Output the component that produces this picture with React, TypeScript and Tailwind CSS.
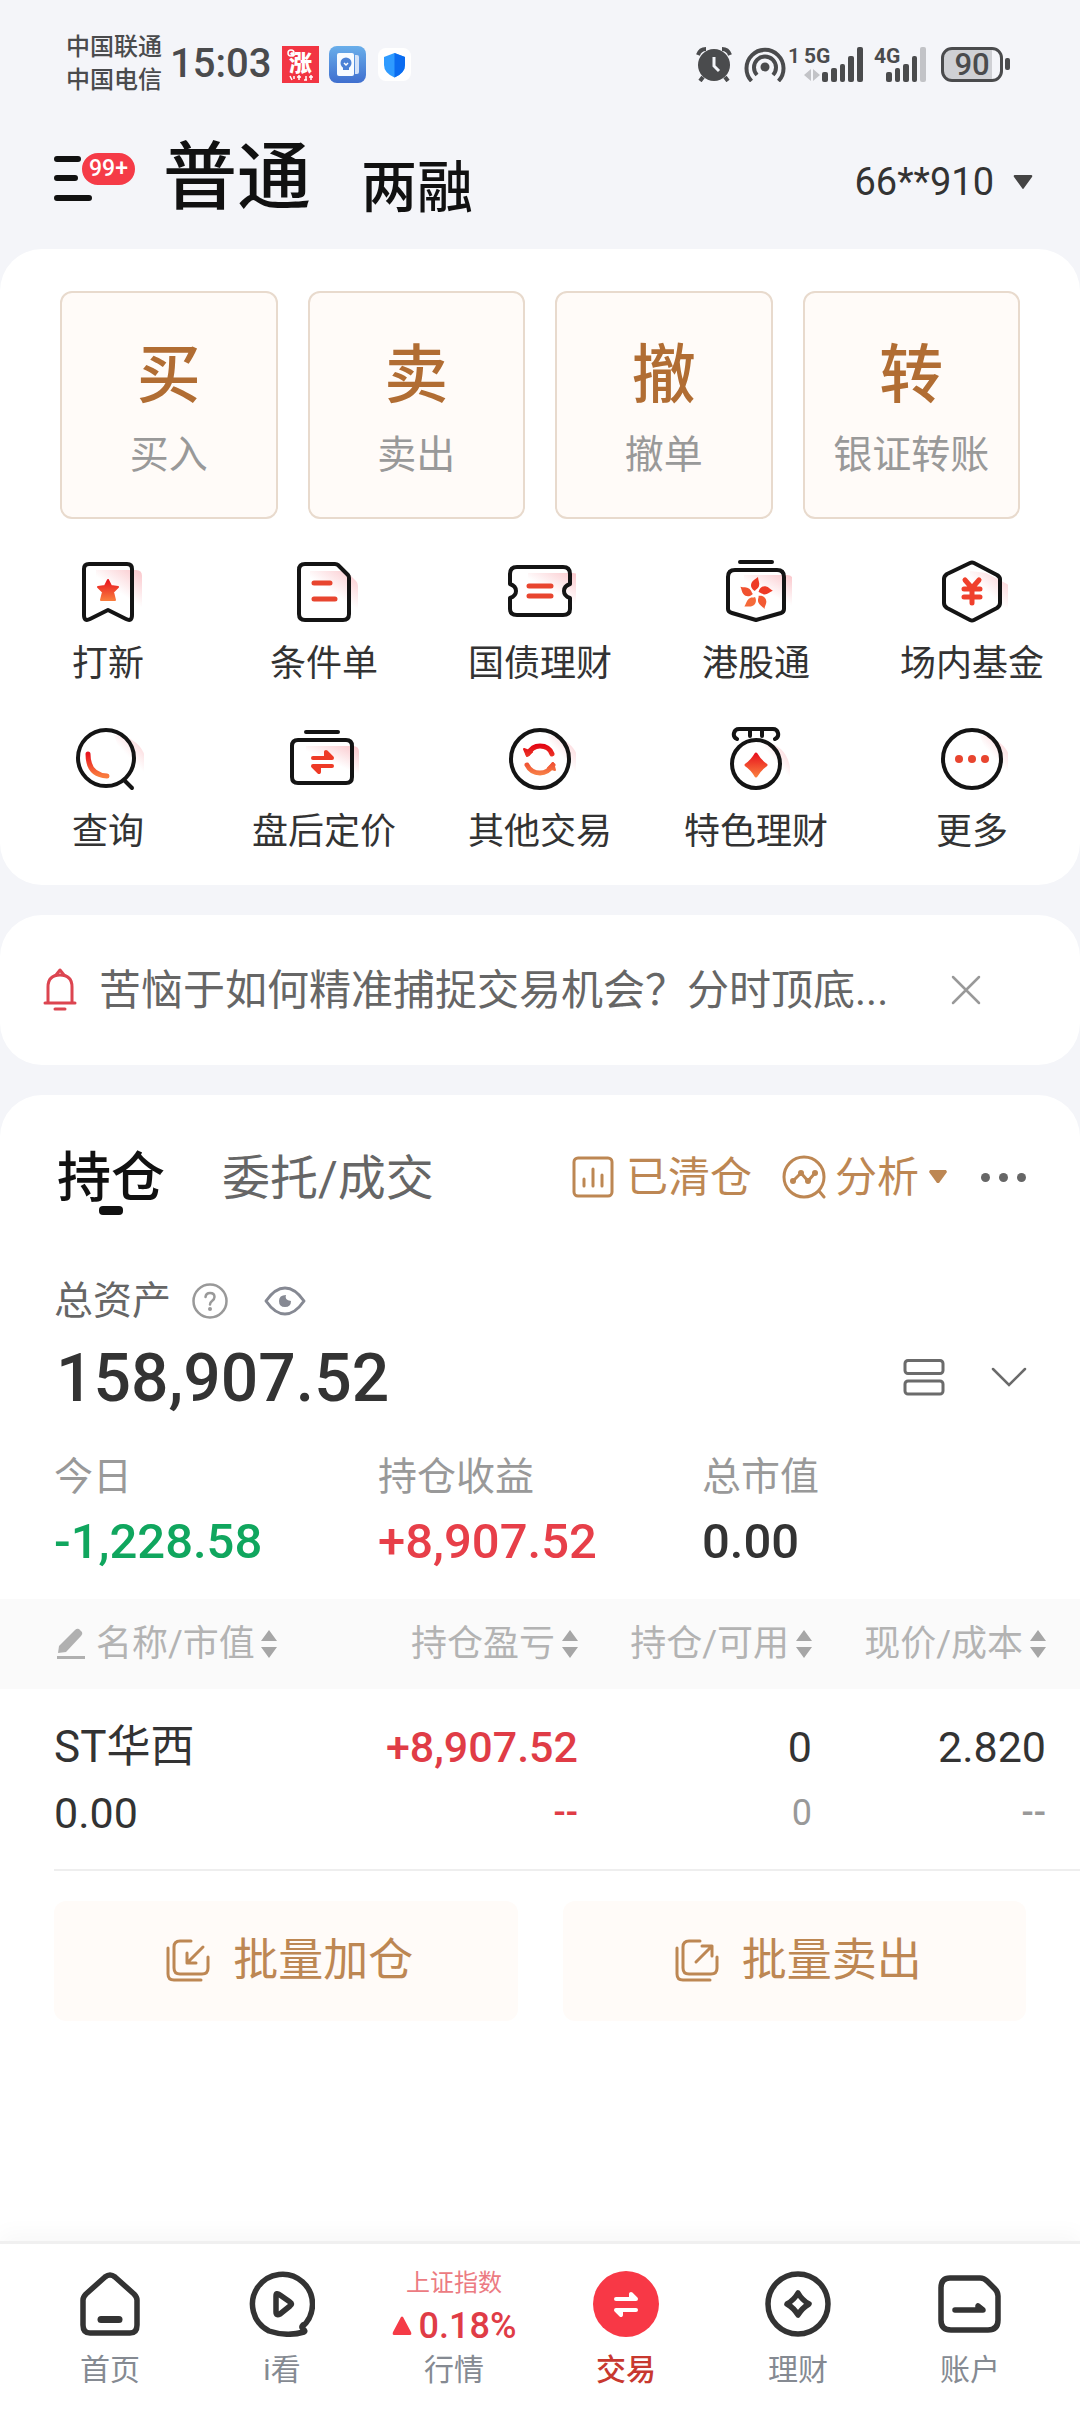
import type { ReactNode } from 'react';

const INK = '#141414';
const DARK = '#333333';
const GOLD = '#bd8753';

interface IconProps {
  children: ReactNode;
  ghost?: string;
}

// 72px feature icon: dark outline, red gradient detail and a pale pink shadow on the right
function FeatureIcon({ children, ghost }: IconProps) {
  return (
    <svg className="h-[72px] w-[72px]" viewBox="0 0 72 72" fill="none" aria-hidden="true">
      {ghost && <path d={ghost} fill="url(#ghost)" />}
      <g stroke={INK} strokeWidth="4" strokeLinecap="round" strokeLinejoin="round">
        {children}
      </g>
    </svg>
  );
}

function SharedGradients() {
  return (
    <svg className="absolute h-0 w-0" aria-hidden="true">
      <defs>
        <linearGradient id="ghost" x1="1" y1="0.1" x2="0.5" y2="0.75">
          <stop offset="0" stopColor="#f8a9b0" stopOpacity="0.6" />
          <stop offset="0.8" stopColor="#f8a9b0" stopOpacity="0" />
        </linearGradient>
        <linearGradient id="red" x1="0" y1="0" x2="0" y2="1">
          <stop offset="0" stopColor="#e8141e" />
          <stop offset="1" stopColor="#f97b3d" />
        </linearGradient>
        <linearGradient id="redSpace" gradientUnits="userSpaceOnUse" x1="0" y1="22" x2="0" y2="54">
          <stop offset="0" stopColor="#e30613" />
          <stop offset="1" stopColor="#f98a4b" />
        </linearGradient>
      </defs>
    </svg>
  );
}

// one petal of the bauhinia, repeated around (36, 39)
const petal = 'M35 36C31 34 30 30 32 27 33 25 36 24 38 22 38 25 40 28 39 31 38 34 36 34 35 36z';

const features = [
  {
    label: '打新',
    icon: (
      <FeatureIcon ghost="M24 15H64q6 0 6 6V56H24z">
        <path d="M17 9H55q5 0 5 5V60q0 7-6 4L36 55 18 64q-6 3-6-4V14q0-5 5-5z" />
        <path d="M36 25L39 31 46 32 41 37 43 45H29L31 37 26 32 33 31z" fill="url(#red)" stroke="url(#red)" strokeWidth="2" />
      </FeatureIcon>
    ),
  },
  {
    label: '条件单',
    icon: (
      <FeatureIcon ghost="M22 16H58L68 26q2 2 2 5V58H22z">
        <path d="M17 9H47q2 0 3 1L60 20q1 1 1 3V59q0 6-6 6H17q-6 0-6-6V15q0-6 6-6z" />
        <path d="M26 28H42M26 44H47" stroke="#e8452f" strokeWidth="5" />
      </FeatureIcon>
    ),
  },
  {
    label: '国债理财',
    icon: (
      <FeatureIcon ghost="M24 18H69q6 0 6 6V54H24z">
        <path d="M13 12H59q7 0 7 7v10q-6 2-6 7t6 7V54q0 6-7 6H13q-7 0-7-6V43q6-2 6-7t-6-7V19q0-7 7-7z" />
        <path d="M25 31H47M25 41H47" stroke="#e8452f" strokeWidth="5" />
      </FeatureIcon>
    ),
  },
  {
    label: '港股通',
    icon: (
      <FeatureIcon ghost="M24 20H67q6 0 6 6V54H24z">
        <path d="M20 7H52M15 15H57q7 0 7 7V54q0 3-3 4L36 65 12 58q-4-1-4-4V22q0-7 7-7z" />
        <g stroke="none">
          <path d={petal} fill="#ee3a26" />
          <path d={petal} fill="#ee3a26" transform="rotate(72 36 39)" />
          <path d={petal} fill="#f35a33" transform="rotate(144 36 39)" />
          <path d={petal} fill="#f56a3a" transform="rotate(216 36 39)" />
          <path d={petal} fill="#f1512f" transform="rotate(288 36 39)" />
        </g>
      </FeatureIcon>
    ),
  },
  {
    label: '场内基金',
    icon: (
      <FeatureIcon ghost="M34 16L50 18 71 29q3 2 3 5V60H34z">
        <path d="M34 8q2-1 4 0L61 20q3 2 3 4V48q0 3-3 5L38 65q-2 1-4 0L11 53q-3-2-3-5V24q0-3 3-5z" />
        <path d="M29 25L36 33 43 25M28 34H44M28 42H44M36 34V48" stroke="#f0402c" strokeWidth="5" />
      </FeatureIcon>
    ),
  },
  {
    label: '查询',
    icon: (
      <FeatureIcon ghost="M42 12Q70 14 75 40V56H58z">
        <circle cx="34" cy="35" r="28" />
        <path d="M53 58L60 65" />
        <path d="M16 31Q16 52 35 53" stroke="url(#red)" strokeWidth="5" />
      </FeatureIcon>
    ),
  },
  {
    label: '盘后定价',
    icon: (
      <FeatureIcon ghost="M18 23H65q6 0 6 6V54H18z">
        <path d="M18 9H50M10 17H58q6 0 6 6V54q0 6-6 6H10q-6 0-6-6V23q0-6 6-6z" />
        <path d="M25 35H44L38 29V35M44 43H25L31 49V43" fill="#ee3a26" stroke="#ee3a26" strokeWidth="4" />
      </FeatureIcon>
    ),
  },
  {
    label: '其他交易',
    icon: (
      <FeatureIcon ghost="M44 12Q70 16 75 38V56H58z">
        <circle cx="36" cy="36" r="29" />
        <path d="M24 31Q28 23 36 23 45 23 48 31M49 42Q44 50 36 50 27 50 23 42" stroke="url(#redSpace)" strokeWidth="5" />
        <path d="M20 26L23 33 28 29zM51 47L49 40 44 45z" fill="url(#redSpace)" stroke="url(#redSpace)" strokeWidth="2" />
      </FeatureIcon>
    ),
  },
  {
    label: '特色理财',
    icon: (
      <FeatureIcon ghost="M44 19Q66 22 70 44V58H52z">
        <circle cx="36" cy="41" r="24" />
        <path d="M17 16Q13 14 14 10 15 6 19 6H53Q57 6 58 10 59 14 55 16M30 7V13M42 7V13" />
        <path d="M36 31Q40 38 46 42 40 46 36 53 32 46 26 42 32 38 36 31z" fill="url(#red)" stroke="url(#red)" strokeWidth="3" />
      </FeatureIcon>
    ),
  },
  {
    label: '更多',
    icon: (
      <FeatureIcon ghost="M44 12Q70 16 75 38V56H58z">
        <circle cx="36" cy="36" r="29" />
        <g fill="#e8452f" stroke="none">
          <circle cx="23" cy="36" r="4" />
          <circle cx="36" cy="36" r="4" />
          <circle cx="49" cy="36" r="4" />
        </g>
      </FeatureIcon>
    ),
  },
];

const quickActions = [
  { mark: '买', label: '买入' },
  { mark: '卖', label: '卖出' },
  { mark: '撤', label: '撤单' },
  { mark: '转', label: '银证转账' },
];

const stats = [
  { label: '今日', value: '-1,228.58', tone: 'text-[#10a65e]' },
  { label: '持仓收益', value: '+8,907.52', tone: 'text-[#e73f49]' },
  { label: '总市值', value: '0.00', tone: 'text-[#333333]' },
];

function StatusBar() {
  return (
    <div className="flex items-center pt-[31px] pr-[70px] pl-[66px] text-[#4a4b4d]">
      <div className="text-[24px] leading-[33px] font-medium">
        <p>中国联通</p>
        <p>中国电信</p>
      </div>
      <p className="ml-2 text-[40px] leading-[48px] font-medium">15:03</p>
      <svg className="ml-[11px] h-[37px] w-[37px] shrink-0" viewBox="0 0 37 37" aria-hidden="true">
        <rect width="37" height="37" fill="#f23543" />
        <text x="7" y="25" fontSize="23" fontWeight="900" fill="#fff">涨</text>
        <circle cx="9" cy="7" r="3" fill="none" stroke="#fff" strokeWidth="1.5" />
        <path d="M8 30l2 4M12 30v3M15 31h4M17 29v5M22 34h3M24 30v4M27 31h4M29 29v5" stroke="#fff" strokeWidth="1.5" />
      </svg>
      <svg className="ml-[10px] h-[37px] w-[37px] shrink-0" viewBox="0 0 37 37" aria-hidden="true">
        <defs>
          <linearGradient id="book" x1="0" y1="0" x2="0" y2="1">
            <stop offset="0" stopColor="#69aeea" />
            <stop offset="1" stopColor="#3f6fcf" />
          </linearGradient>
        </defs>
        <rect width="37" height="37" rx="8" fill="url(#book)" />
        <path d="M26 9h2q2 0 2 2V26q0 2-2 2h-2z" fill="#d3e2f8" />
        <rect x="8" y="7" width="17" height="23" rx="2" fill="#f7fbff" />
        <circle cx="17" cy="17" r="5.5" fill="#4c82d6" />
        <path d="M14 20h6v4h-6z" fill="#4c82d6" />
        <path d="M15 17l2 2 2-2" stroke="#fff" strokeWidth="1.5" fill="none" />
      </svg>
      <svg className="ml-3 h-[33px] w-[33px] shrink-0" viewBox="0 0 33 33" aria-hidden="true">
        <rect width="33" height="33" rx="8" fill="#fff" />
        <path d="M16.5 5L27 9v8q0 8-10.5 12.5Q6 25 6 17V9z" fill="#2f9bff" />
        <path d="M16.5 5L27 9v8q0 8-10.5 12.5z" fill="#0b6cf0" />
      </svg>

      <div className="ml-auto flex items-center">
        <svg className="h-[36px] w-[36px]" viewBox="0 0 36 36" fill="none" aria-hidden="true">
          <circle cx="18" cy="19" r="16" fill="#4a4b4d" />
          <path d="M2 9Q4 3 10 3M34 9Q32 3 26 3" stroke="#4a4b4d" strokeWidth="4" />
          <path d="M7 31L4 35M29 31L32 35" stroke="#4a4b4d" strokeWidth="4" />
          <path d="M18 11V20L23 25" stroke="#f4f5f9" strokeWidth="3" />
        </svg>
        <svg className="ml-3 h-[36px] w-[42px]" viewBox="0 0 42 36" fill="none" stroke="#4a4b4d" strokeWidth="4" aria-hidden="true">
          <path d="M7.5 35A18.5 18.5 0 1 1 34.5 35" />
          <path d="M13 29A11 11 0 1 1 29 29" />
          <circle cx="21" cy="21" r="4.5" fill="#4a4b4d" stroke="none" />
        </svg>
        <svg className="ml-[2px] h-[44px] w-[77px] overflow-visible" viewBox="0 -4 77 44" fill="#4a4b4d" aria-hidden="true">
          <text x="0" y="17" fontSize="21" fontWeight="600">1</text>
          <text x="16" y="17" fontSize="21" fontWeight="700">5G</text>
          <path d="M16 29L23 23V35zM32 29L25 23V35z" fill="#c2c3c7" />
          <rect x="34" y="26" width="6" height="10" rx="2" />
          <rect x="43" y="22" width="6" height="14" rx="2" />
          <rect x="52" y="18" width="5" height="18" rx="2" />
          <rect x="60" y="10" width="6" height="26" rx="2" />
          <rect x="69" y="1" width="6" height="35" rx="2" />
        </svg>
        <svg className="ml-[8px] h-[44px] w-[54px] overflow-visible" viewBox="0 -4 54 44" fill="#4a4b4d" aria-hidden="true">
          <text x="1" y="17" fontSize="21" fontWeight="700">4G</text>
          <rect x="13" y="26" width="6" height="10" rx="2" />
          <rect x="22" y="22" width="5" height="14" rx="2" />
          <rect x="30" y="18" width="6" height="18" rx="2" />
          <rect x="39" y="10" width="5" height="26" rx="2" />
          <rect x="47" y="1" width="6" height="35" rx="2" fill="#c2c3c7" />
        </svg>
        <div className="ml-[14px] flex h-[35px] w-[62px] items-center justify-center rounded-[11px] border-3 border-[#4a4b4d] bg-[linear-gradient(90deg,#cfd0d4_85%,transparent_85%)] text-[31px] leading-none font-medium">
          90
        </div>
        <span className="ml-[2px] h-[12px] w-[5px] rounded-[2px] bg-[#4a4b4d]" />
      </div>
    </div>
  );
}

function Header() {
  return (
    <header className="flex items-center pt-[27px] pr-[47px] pb-[18px] pl-[54px] text-[#111111]">
      <button className="relative h-[46px] w-[82px]" aria-label="菜单">
        <svg className="h-[46px] w-[40px]" viewBox="0 0 40 46" stroke="#111" strokeWidth="6" strokeLinecap="round" aria-hidden="true">
          <path d="M3 4H24M3 23H21M3 43H35" />
        </svg>
        <span className="absolute -top-1 left-[26px] rounded-full border-2 border-[#f4f5f9] bg-[#f53b47] px-[7px] text-[23px] leading-[32px] font-medium text-white">
          99+
        </span>
      </button>
      <nav className="ml-[27px] flex items-end gap-[50px]">
        <a href="#normal" className="text-[74px] leading-[107px] font-medium">普通</a>
        <a href="#margin" className="text-[56px] leading-[86px] font-medium">两融</a>
      </nav>
      <button className="ml-auto flex items-center gap-[19px] pt-[8px] text-[38px] leading-[48px] text-[#333333]">
        66**910
        <svg className="h-[16px] w-[20px]" viewBox="0 0 20 16" aria-hidden="true">
          <path d="M2 1H18Q20 1 19 3L11 14Q10 16 9 14L1 3Q0 1 2 1z" fill="#444" />
        </svg>
      </button>
    </header>
  );
}

function SortIcon() {
  return (
    <svg className="h-[28px] w-[16px] shrink-0" viewBox="0 0 16 28" fill="#a6a6a6" aria-hidden="true">
      <path d="M8 0L16 11H0zM8 28L16 17H0z" />
    </svg>
  );
}

function BatchIcon({ arrow }: { arrow: string }) {
  return (
    <svg className="h-[44px] w-[44px]" viewBox="0 0 44 44" fill="none" stroke={GOLD} strokeWidth="3" strokeLinecap="round" strokeLinejoin="round" aria-hidden="true">
      <path d="M25 2H14Q8 2 8 8V29Q8 35 14 35H36Q42 35 42 29V18" />
      <path d="M2 9V35Q2 41 8 41H35" />
      <path d={arrow} />
    </svg>
  );
}

function NavItem({ label, active, children }: { label: string; active?: boolean; children: ReactNode }) {
  return (
    <a href={`#${label}`} className="flex flex-1 flex-col items-center">
      <span className="flex h-[66px] flex-col items-center">{children}</span>
      <span className={`mt-[13px] text-[30px] leading-[40px] ${active ? 'font-medium text-[#c8382f]' : 'text-[#858a92]'}`}>
        {label}
      </span>
    </a>
  );
}

function NavIcon({ children }: { children: ReactNode }) {
  return (
    <svg className="h-[66px] w-[66px]" viewBox="0 0 66 66" fill="none" stroke={DARK} strokeWidth="5.5" strokeLinecap="round" strokeLinejoin="round" aria-hidden="true">
      {children}
    </svg>
  );
}

function BottomNav() {
  return (
    <footer className="sticky bottom-0 flex border-t-3 border-[#f0f0f0] bg-white px-[24px] pt-[27px] pb-[22px] shadow-[0_-8px_20px_rgba(0,0,0,0.03)]">
      <NavItem label="首页">
        <NavIcon>
          <path d="M28 6Q33 2 38 6L57 23Q60 26 60 29V54Q60 62 53 62H13Q6 62 6 54V29Q6 26 9 23z" />
          <path d="M24 48.5H42" strokeWidth="7" />
        </NavIcon>
      </NavItem>
      <NavItem label="i看">
        <NavIcon>
          <path d="M53 56A30 30 0 1 0 20 60Q38 66 55 61 57 60 54 58 52 56 54 54" />
          <path d="M27 25Q27 21 31 24L41 31Q44 33 41 35L31 43Q27 45 27 41z" />
        </NavIcon>
      </NavItem>
      <NavItem label="行情">
        <span className="text-[24px] leading-[24px] text-[#ec7b82]">上证指数</span>
        <span className="mt-[15px] flex items-center gap-[7px] text-[36px] leading-[32px] font-medium text-[#e03c46]">
          <svg className="h-[20px] w-[20px]" viewBox="0 0 20 20" aria-hidden="true">
            <path d="M9 1Q10 0 11 1L19 16Q20 19 18 19H2Q0 19 1 16z" fill="#f53b47" />
          </svg>
          0.18%
        </span>
      </NavItem>
      <NavItem label="交易" active>
        <svg className="h-[66px] w-[66px]" viewBox="0 0 66 66" aria-hidden="true">
          <circle cx="33" cy="33" r="33" fill="#f83846" />
          <path d="M23 28H43L38 23V28M43 39H23L28 44V39" fill="#fff" stroke="#fff" strokeWidth="4" strokeLinecap="round" strokeLinejoin="round" />
        </svg>
      </NavItem>
      <NavItem label="理财">
        <NavIcon>
          <circle cx="33" cy="33" r="30" />
          <path d="M33 22Q37 29 44 33 37 37 33 44 29 37 22 33 29 29 33 22z" />
        </NavIcon>
      </NavItem>
      <NavItem label="账户">
        <NavIcon>
          <path d="M13 7H43Q47 7 50 10L58 18Q61 21 61 25V49Q61 59 51 59H14Q4 59 4 49V17Q4 7 13 7z" />
          <path d="M18 39H46L41 35V39" />
        </NavIcon>
      </NavItem>
    </footer>
  );
}

export default function App() {
  return (
    <div className="flex min-h-screen flex-col bg-[#f4f5f9] font-['Roboto','Noto_Sans_CJK_SC',sans-serif]">
      <SharedGradients />
      <StatusBar />
      <Header />

      <main className="flex flex-1 flex-col gap-[30px]">
        <section className="rounded-[42px] bg-white pt-[42px] pb-[29px]">
          <div className="grid grid-cols-4 gap-[30px] px-[60px]">
            {quickActions.map((action) => (
              <button
                key={action.label}
                className="flex flex-col items-center rounded-[12px] border-2 border-[#e8dacd] bg-[#fffbf8] pt-[39px] pb-[38px]"
              >
                <span className="text-[64px] leading-[88px] font-medium text-[#b16d33]">{action.mark}</span>
                <span className="mt-[11px] text-[39px] leading-[48px] text-[#999999]">{action.label}</span>
              </button>
            ))}
          </div>
          <div className="mt-[36px] grid grid-cols-5 gap-y-[35px]">
            {features.map((feature) => (
              <a key={feature.label} href={`#${feature.label}`} className="flex flex-col items-center">
                {feature.icon}
                <span className="mt-[13px] text-[36px] leading-[48px] whitespace-nowrap text-[#333333]">
                  {feature.label}
                </span>
              </a>
            ))}
          </div>
        </section>

        <section className="flex items-center rounded-[42px] bg-white py-[45px] pr-[99px] pl-[42px]">
          <svg className="h-[44px] w-[36px] shrink-0" viewBox="0 0 36 44" fill="none" stroke="#dc4550" strokeWidth="3" strokeLinecap="round" strokeLinejoin="round" aria-hidden="true">
            <path d="M6 34V19Q6 7 18 7 30 7 30 19V34M3 35H33M13 41H23" />
            <path d="M14 7L18 2 22 7" />
          </svg>
          <p className="ml-[21px] flex-1 truncate pt-[2px] text-[42px] leading-[58px] text-[#666666]">
            苦恼于如何精准捕捉交易机会？分时顶底...
          </p>
          <button aria-label="关闭">
            <svg className="h-[30px] w-[30px]" viewBox="0 0 30 30" stroke="#999" strokeWidth="2.5" strokeLinecap="round" aria-hidden="true">
              <path d="M2 2L28 28M28 2L2 28" />
            </svg>
          </button>
        </section>

        <section className="flex-1 rounded-t-[42px] bg-white pt-[42px] pb-[60px]">
          <div className="flex h-[80px] items-center pr-[54px] pl-[57px]">
            <a href="#positions" className="relative pt-1 text-[54px] leading-[80px] font-medium text-[#111111]">
              持仓
              <span className="absolute bottom-1 left-1/2 h-[9px] w-[24px] -translate-x-1/2 rounded-[4px] bg-[#111111]" />
            </a>
            <a href="#orders" className="ml-[57px] pt-1 text-[48px] leading-[80px] text-[#666666]">委托/成交</a>
            <a href="#cleared" className="ml-auto flex items-center gap-[12px] text-[42px] text-[#bd8753]">
              <svg className="h-[42px] w-[42px]" viewBox="0 0 42 42" fill="none" stroke={GOLD} strokeWidth="3" strokeLinecap="round" aria-hidden="true">
                <rect x="2" y="2" width="38" height="38" rx="4" />
                <path d="M12 23V30M21 13V30M30 19V30" />
              </svg>
              已清仓
            </a>
            <button className="ml-[30px] flex items-center text-[42px] text-[#bd8753]">
              <svg className="h-[44px] w-[44px]" viewBox="0 0 44 44" fill="none" stroke={GOLD} strokeWidth="3" strokeLinecap="round" strokeLinejoin="round" aria-hidden="true">
                <circle cx="22" cy="22" r="20" />
                <path d="M37 36L42 42M11 26L19 18 26 26 33 18" />
                <g fill={GOLD} stroke="none">
                  <circle cx="11" cy="26" r="3" />
                  <circle cx="19" cy="18" r="3" />
                  <circle cx="26" cy="26" r="3" />
                  <circle cx="33" cy="18" r="3" />
                </g>
              </svg>
              <span className="ml-[9px]">分析</span>
              <svg className="ml-[10px] h-[14px] w-[18px]" viewBox="0 0 18 14" aria-hidden="true">
                <path d="M1 0H17L18 2 10 13H8L0 2z" fill={GOLD} />
              </svg>
            </button>
            <button className="ml-[34px] flex gap-[9px]" aria-label="更多操作">
              <span className="h-[9px] w-[9px] rounded-full bg-[#666666]" />
              <span className="h-[9px] w-[9px] rounded-full bg-[#666666]" />
              <span className="h-[9px] w-[9px] rounded-full bg-[#666666]" />
            </button>
          </div>

          <div className="mt-[60px] flex items-center pl-[54px] text-[39px] leading-[48px] text-[#666666]">
            总资产
            <button className="ml-[21px]" aria-label="说明">
              <svg className="h-[36px] w-[36px]" viewBox="0 0 36 36" fill="none" stroke="#999" strokeWidth="2.5" strokeLinecap="round" aria-hidden="true">
                <circle cx="18" cy="18" r="16.5" />
                <path d="M13.5 14Q14 10 18 10 22.5 10 22.5 14 22.5 16 20 18 18 19.5 18 21.5" />
                <circle cx="18" cy="26" r="2" fill="#999" stroke="none" />
              </svg>
            </button>
            <button className="ml-[36px]" aria-label="隐藏金额">
              <svg className="h-[30px] w-[42px]" viewBox="0 0 42 30" fill="none" stroke="#868993" strokeWidth="3" strokeLinejoin="round" aria-hidden="true">
                <path d="M2 15Q11 2 21 2 31 2 40 15 31 28 21 28 11 28 2 15z" />
                <path d="M22 9Q20 14 27 15 27 21 21 21 15 21 15 15 15 9 22 9z" fill="#868993" stroke="none" />
              </svg>
            </button>
          </div>

          <div className="mt-[14px] flex items-center pr-[53px] pl-[56px]">
            <p className="text-[66px] leading-[80px] font-medium text-[#333333]">158,907.52</p>
            <button className="ml-auto" aria-label="布局">
              <svg className="h-[40px] w-[42px]" viewBox="0 0 42 40" fill="none" stroke="#6b6b6b" strokeWidth="3" aria-hidden="true">
                <rect x="2" y="1.5" width="38" height="13" rx="3" />
                <rect x="2" y="22" width="38" height="13" rx="3" />
              </svg>
            </button>
            <button className="ml-[46px]" aria-label="展开">
              <svg className="h-[24px] w-[36px]" viewBox="0 0 36 24" fill="none" stroke="#6b6b6b" strokeWidth="2.5" strokeLinecap="round" aria-hidden="true">
                <path d="M2 2L18 18 34 2" />
              </svg>
            </button>
          </div>

          <dl className="mt-[34px] grid grid-cols-3 pr-[54px] pl-[54px]">
            {stats.map((stat) => (
              <div key={stat.label}>
                <dt className="text-[39px] leading-[48px] text-[#999999]">{stat.label}</dt>
                <dd className={`mt-[11px] text-[49px] leading-[60px] font-medium ${stat.tone}`}>{stat.value}</dd>
              </div>
            ))}
          </dl>

          <table className="mt-[27px] w-full table-fixed">
            <thead className="bg-[#fafafa] text-[36px] leading-[48px] text-[#b3b3b3]">
              <tr className="h-[90px]">
                <th className="pl-[57px] font-normal">
                  <button className="flex items-center whitespace-nowrap">
                    <svg className="mr-[11px] h-[32px] w-[28px]" viewBox="0 0 28 32" fill="#b0b0b0" aria-hidden="true">
                      <path d="M18 2Q20 0 22 1L25 4Q26 6 24 8L9 24 1 25 2 18z" />
                      <path d="M0 28H28V31H0z" />
                    </svg>
                    名称/市值
                    <span className="ml-[6px]"><SortIcon /></span>
                  </button>
                </th>
                <th className="w-[234px] font-normal">
                  <button className="ml-auto flex items-center gap-[7px] whitespace-nowrap">持仓盈亏<SortIcon /></button>
                </th>
                <th className="w-[234px] font-normal">
                  <button className="ml-auto flex items-center gap-[7px] whitespace-nowrap">持仓/可用<SortIcon /></button>
                </th>
                <th className="w-[268px] pr-[34px] font-normal">
                  <button className="ml-auto flex items-center gap-[7px] whitespace-nowrap">现价/成本<SortIcon /></button>
                </th>
              </tr>
            </thead>
            <tbody className="text-right text-[43px] leading-[56px] text-[#333333]">
              <tr>
                <td className="pt-[30px] pb-[28px] pl-[54px] text-left">
                  <p className="text-[44px]">ST华西</p>
                  <p className="mt-[10px]">0.00</p>
                </td>
                <td className="pt-[30px] pb-[28px] font-medium text-[#e03c46]">
                  <p>+8,907.52</p>
                  <p className="mt-[10px] text-[36px]">--</p>
                </td>
                <td className="pt-[30px] pb-[28px]">
                  <p>0</p>
                  <p className="mt-[10px] text-[36px] text-[#999999]">0</p>
                </td>
                <td className="pt-[30px] pr-[34px] pb-[28px]">
                  <p>2.820</p>
                  <p className="mt-[10px] text-[36px] font-medium text-[#999999]">--</p>
                </td>
              </tr>
            </tbody>
          </table>
          <hr className="ml-[54px] border-t-2 border-[#eeeeee]" />

          <div className="mt-[30px] grid grid-cols-2 gap-[45px] px-[54px] text-[45px] leading-[60px] text-[#bd8753]">
            <button className="flex items-center justify-center gap-[23px] rounded-[12px] bg-[#fffbf8] py-[30px] pl-2">
              <BatchIcon arrow="M37 8L21 24M21 14V24H30" />
              批量加仓
            </button>
            <button className="flex items-center justify-center gap-[23px] rounded-[12px] bg-[#fffbf8] py-[30px] pl-2">
              <BatchIcon arrow="M21 23L37 7M27 7H37V17" />
              批量卖出
            </button>
          </div>
        </section>
      </main>

      <BottomNav />
    </div>
  );
}
